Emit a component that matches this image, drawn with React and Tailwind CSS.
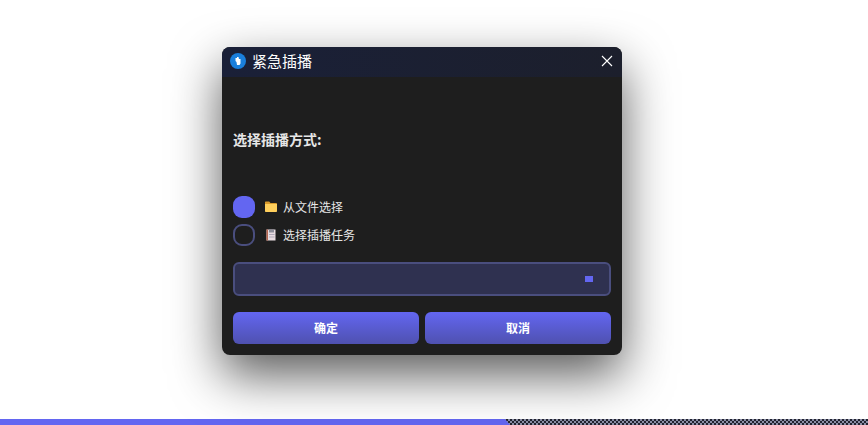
import React from 'react';

const FolderIcon = () => (
  <svg width="14" height="14" viewBox="0 0 14 14">
    <path d="M1 2.5C1 1.9 1.4 1.5 2 1.5h3.2l1.3 1.5H12c.6 0 1 .5 1 1V5H1z" fill="#d99a2b" />
    <path d="M1 4h12v7c0 .6-.4 1-1 1H2c-.6 0-1-.4-1-1z" fill="#ffcf5c" />
  </svg>
);

const NoteIcon = () => (
  <svg width="14" height="14" viewBox="0 0 14 14">
    <rect x="2.5" y="1.5" width="9" height="11" fill="#e8dce0" />
    <rect x="2.5" y="1.5" width="1.5" height="11" fill="#b5654f" />
    <rect x="5" y="1.5" width="5" height="3" fill="#8d8d99" />
    <rect x="5" y="6" width="5.5" height="1" fill="#b0a8b8" />
    <rect x="5" y="8.5" width="5.5" height="1" fill="#b0a8b8" />
  </svg>
);

const AppIcon = () => (
  <svg width="16" height="16" viewBox="0 0 16 16">
    <circle cx="8" cy="8" r="8" fill="#1a7fdc" />
    <path d="M5.5 5h1.5V4h1.5l.5 2h1.5v4.5l-1 1.5H7l-.5-3-1-1z" fill="#ffffff" />
  </svg>
);

const App = () => {
  return (
    <div className="h-[425px] w-full overflow-hidden bg-white flex flex-col font-['Noto_Sans_CJK_SC','Noto_Sans',sans-serif]">
      <div className="flex-1 flex justify-center pt-[47px] pr-[24px]">
        <div className="relative z-10 w-[400px] h-[308px] bg-[#1e1e1e] rounded-[8px] overflow-hidden flex flex-col shadow-[0_20px_50px_rgba(0,0,0,0.65)]">
          <div className="h-[30px] flex items-center justify-between pl-2 pr-[9px] bg-gradient-to-r from-[#1a2038] to-[#1c1f2c]">
            <div className="flex items-center gap-[6px] -mt-[3px]">
              <AppIcon />
              <span className="text-[15px] leading-[22px] text-white">紧急插播</span>
            </div>
            <svg className="-mt-[3px]" width="12" height="12" viewBox="0 0 12 12" stroke="#ffffff" strokeWidth="1.1">
              <path d="M1 1l10 10M11 1L1 11" />
            </svg>
          </div>

          <div className="flex-1 flex flex-col px-[11px]">
            <div className="mt-[52px] text-[14px] leading-[20px] font-bold text-[#e6e6e6]">选择插播方式:</div>

            <div className="mt-[47px] flex flex-col gap-[6px]">
              <div className="flex items-center h-[22px]">
                <div className="w-[22px] h-[22px] rounded-[9px] bg-[#6366f1]"></div>
                <div className="ml-[9px]"><FolderIcon /></div>
                <span className="ml-[5px] text-[12px] text-[#e6e6e6]">从文件选择</span>
              </div>
              <div className="flex items-center h-[22px]">
                <div className="w-[22px] h-[22px] rounded-[9px] border-2 border-[#4a4e7e]"></div>
                <div className="ml-[9px]"><NoteIcon /></div>
                <span className="ml-[5px] text-[12px] text-[#e6e6e6]">选择插播任务</span>
              </div>
            </div>

            <div className="mt-[16px] h-[34px] rounded-[6px] border-2 border-[#4a4e7e] bg-[#2f3150] flex items-center justify-end pr-[16px]">
              <div className="w-2 h-[6px] bg-[#6366f1]"></div>
            </div>

            <div className="mt-[16px] flex gap-[6px]">
              <button className="flex-1 h-[32px] rounded-[6px] bg-gradient-to-b from-[#6366f1] to-[#4f51b0] text-white text-[12px] font-bold">确定</button>
              <button className="flex-1 h-[32px] rounded-[6px] bg-gradient-to-b from-[#6366f1] to-[#4f51b0] text-white text-[12px] font-bold">取消</button>
            </div>
          </div>
        </div>
      </div>

      <div className="h-[6px] flex bg-[repeating-conic-gradient(#22232f_0_25%,#8a8ea6_0_50%)] bg-[length:4px_4px]">
        <div className="w-[510px] bg-[#6366f1] [clip-path:polygon(0_0,505px_0,100%_100%,0_100%)]"></div>
      </div>
    </div>
  );
};

export default App;
